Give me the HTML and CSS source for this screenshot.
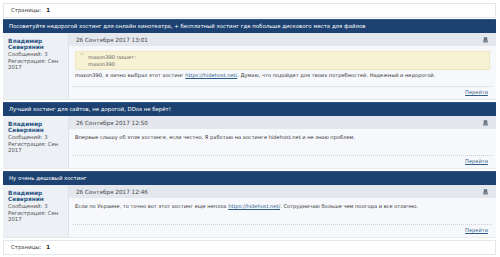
FILE: index.html
```html
<!DOCTYPE html>
<html lang="ru">
<head>
    <meta charset="UTF-8">
    <title>Хостинг - обсуждение</title>
    <link rel="stylesheet" href="styles.css">
</head>
<body>

<div class="pages">Страницы: <b>1</b></div>

<div class="thread">
    <div class="title">Посоветуйте недорогой хостинг для онлайн кинотеатра, + бесплатный хостинг где побольше дискового места для файлов</div>
    <div class="post">
        <div class="user">
            <a class="name" href="#">Владимир Северянин</a>
            <div>Сообщений: 3</div>
            <div>Регистрация: Сен 2017</div>
        </div>
        <div class="content">
            <div class="date">
                <span>26 Сентября 2017 13:01</span>
                <svg class="icon" width="5" height="6" viewBox="0 0 5 6"><path d="M1 0.5h3v2.5h-3z M0.5 3.5h4v1h-4z M0 5.3h5" fill="#6b7684" stroke="#6b7684" stroke-width="0.6"/></svg>
            </div>
            <div class="message">
                <div class="quote">
                    <span class="mark">&ldquo;</span>
                    <div>maxon390 пишет:</div>
                    <div>maxon390</div>
                </div>
                maxon390, я лично выбрал этот хостинг <a href="#">https://hidehost.net/</a>. Думаю, что подойдет для твоих потребностей. Надежный и недорогой.
            </div>
            <div class="footer"><a href="#">Перейти</a></div>
        </div>
    </div>
</div>

<div class="thread">
    <div class="title">Лучший хостинг для сайтов, не дорогой, DDos не берёт!</div>
    <div class="post">
        <div class="user">
            <a class="name" href="#">Владимир Северянин</a>
            <div>Сообщений: 3</div>
            <div>Регистрация: Сен 2017</div>
        </div>
        <div class="content">
            <div class="date">
                <span>26 Сентября 2017 12:50</span>
                <svg class="icon" width="5" height="6" viewBox="0 0 5 6"><path d="M1 0.5h3v2.5h-3z M0.5 3.5h4v1h-4z M0 5.3h5" fill="#6b7684" stroke="#6b7684" stroke-width="0.6"/></svg>
            </div>
            <div class="message">
                Впервые слышу об этом хостинге, если честно. Я работаю на хостинге hidehost.net и не знаю проблем.
            </div>
            <div class="footer"><a href="#">Перейти</a></div>
        </div>
    </div>
</div>

<div class="thread">
    <div class="title">Ну очень дешовый хостинг</div>
    <div class="post">
        <div class="user">
            <a class="name" href="#">Владимир Северянин</a>
            <div>Сообщений: 3</div>
            <div>Регистрация: Сен 2017</div>
        </div>
        <div class="content">
            <div class="date">
                <span>26 Сентября 2017 12:46</span>
                <svg class="icon" width="5" height="6" viewBox="0 0 5 6"><path d="M1 0.5h3v2.5h-3z M0.5 3.5h4v1h-4z M0 5.3h5" fill="#6b7684" stroke="#6b7684" stroke-width="0.6"/></svg>
            </div>
            <div class="message">
                Если по Украине, то точно вот этот хостинг еще неплох <a href="#">https://hidehost.net/</a>. Сотрудничаю больше чем полгода и все отлично.
            </div>
            <div class="footer"><a href="#">Перейти</a></div>
        </div>
    </div>
</div>

<div class="pages bottom">Страницы: <b>1</b></div>

</body>
</html>
```

FILE: styles.css
```css
body {
    margin: 0;
    padding: 3px 4px 1px 3px;
    background-color: #fff;
    font-family: 'DejaVu Sans', Verdana, sans-serif;
    font-size: 5.4px;
    color: #333;
}

a {
    color: #2b5d8c;
}

.pages {
    height: 13px;
    line-height: 13px;
    padding-left: 7px;
    border: 1px solid #e3e7ec;
    background-color: #fff;
    color: #444;
}

.pages.bottom {
    margin-top: 2px;
}

.pages b {
    margin-left: 3px;
    color: #222;
}

.thread {
    margin-top: 1px;
    margin-bottom: 2px;
}

.title {
    height: 13px;
    line-height: 13px;
    padding-left: 6px;
    background-color: #1d4272;
    border-top: 1px solid #2f5688;
    color: #fff;
}

.post {
    display: flex;
    border-bottom: 1px solid #e6e9ee;
}

.user {
    width: 56px;
    flex-shrink: 0;
    padding: 5px 4px 4px 5px;
    background-color: #edf1f6;
    border-right: 1px solid #dde2e9;
    line-height: 6.2px;
    color: #555;
}

.user .name {
    display: block;
    margin-bottom: 1px;
    color: #2a5582;
    font-weight: bold;
    font-size: 5.8px;
    line-height: 6.2px;
    text-decoration: none;
}

.content {
    flex: 1;
    display: flex;
    flex-direction: column;
    background-color: #f7f8fb;
}

.date {
    display: flex;
    justify-content: space-between;
    align-items: center;
    height: 13px;
    padding: 0 8px 0 7px;
    background-color: #e4e8ee;
    color: #444;
    font-size: 5.7px;
}

.icon {
    display: block;
}

.message {
    box-sizing: border-box;
    min-height: 26px;
    padding: 5px 6px 7px 6px;
    font-size: 5.1px;
    line-height: 7px;
}

.quote {
    position: relative;
    margin-bottom: 2px;
    padding: 2px 6px 2px 12px;
    background-color: #f8f2d5;
    border: 1px solid #efe7c4;
    color: #666;
    line-height: 6.5px;
}

.quote .mark {
    position: absolute;
    left: 4px;
    top: 1px;
    color: #b9a96a;
    font-size: 7px;
}

.footer {
    height: 12px;
    line-height: 11px;
    margin: 0 4px;
    border-top: 1px dotted #c9ced6;
    text-align: right;
    padding-right: 4px;
    font-size: 5.1px;
}
```
